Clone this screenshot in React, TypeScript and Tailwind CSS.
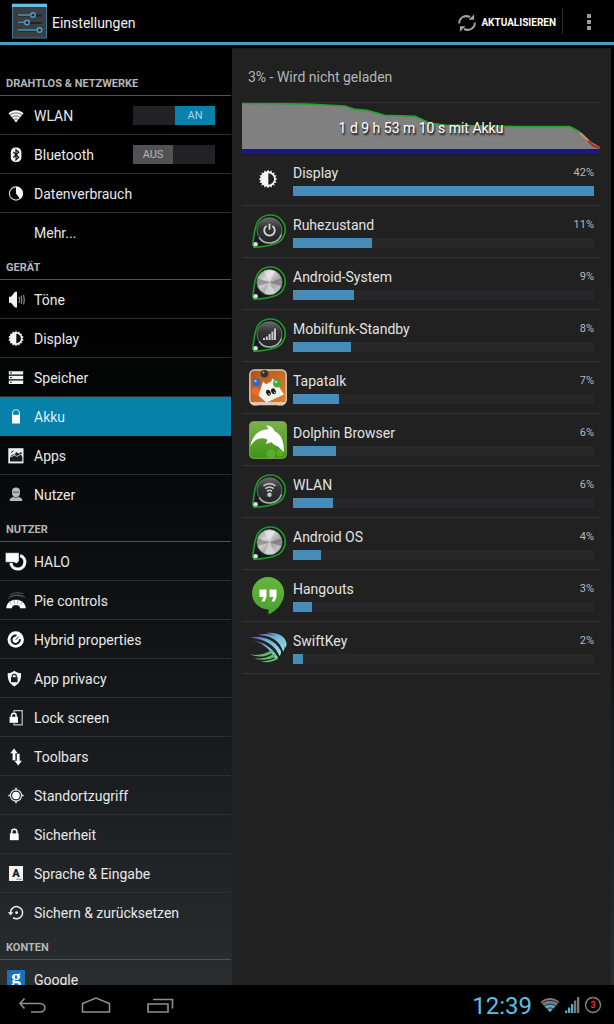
import type { ReactNode } from 'react';

function Glyph({ children }: { children: ReactNode }) {
  return (
    <svg viewBox="0 0 20 20" className="size-5 shrink-0 overflow-visible" fill="none" aria-hidden="true">
      {children}
    </svg>
  );
}

function gearPoints(cx: number, cy: number, outer: number, inner: number, teeth: number) {
  return Array.from({ length: teeth * 2 }, (_, i) => {
    const r = i % 2 === 0 ? outer : inner;
    const a = (i * Math.PI) / teeth;
    return `${(cx + r * Math.sin(a)).toFixed(2)},${(cy - r * Math.cos(a)).toFixed(2)}`;
  }).join(' ');
}

const WifiGlyph = (
  <Glyph>
    <path d="M10 16.5 2.5 7.2C6.6 3.3 13.4 3.3 17.5 7.2Z" fill="#f4f4f4" />
    <path d="M3.6 9.4c3.6-3.3 9.2-3.3 12.8 0M5.4 11.7c2.6-2.4 6.6-2.4 9.2 0M7.3 13.9c1.6-1.4 3.8-1.4 5.4 0" stroke="#111" strokeWidth=".6" />
  </Glyph>
);

const BluetoothGlyph = (
  <Glyph>
    <rect x="4.8" y="2.5" width="10.6" height="14.6" rx="4.6" fill="#f2f2f2" />
    <path d="m7.3 7 5.4 5.2-2.7 2.6V4.8l2.7 2.5-5.4 5.2" stroke="#111" strokeWidth="1.2" />
  </Glyph>
);

const DataGlyph = (
  <Glyph>
    <circle cx="10" cy="9.5" r="6.6" stroke="#d8d8d8" strokeWidth="1.1" />
    <path d="M10 2.7a6.8 6.8 0 0 1 4.2 12.2L10 9.5Z" fill="#fff" />
  </Glyph>
);

const SoundGlyph = (
  <Glyph>
    <path d="M3 6.8h2L9 1.8h2v15.800H9l-4-4.800H3Z" fill="#f4f4f4" />
    <path d="M12.8 6.8c1.1 1.9 1.1 4.1 0 6M15.2 5.6c.9 2.9.9 5.6 0 8.3M17.6 4.8c.9 3.3.9 6.6 0 9.6" stroke="#8d8d8d" strokeWidth="1.2" />
  </Glyph>
);

const DisplayGlyph = (
  <Glyph>
    <polygon points={gearPoints(10, 9.5, 7.8, 6.2, 14)} fill="#f4f4f4" />
    <path d="M10.3 4.8a4.7 4.7 0 0 1 0 9.4Z" fill="#0b0b0b" />
  </Glyph>
);

const StorageGlyph = (
  <Glyph>
    <path d="M2.8 3.2h14.4v3.4H2.8ZM2.8 7.8h14.4v3.4H2.8ZM2.8 12.4h14.4v3.600H2.8Z" fill="#f4f4f4" />
    <path d="M4 4.900h2M4 9.500h2M4 14.200h2" stroke="#222" />
  </Glyph>
);

const BatteryGlyph = (
  <Glyph>
    <path d="M6.6 8V5.200L8.300 3h3.400l1.700 2.200V8" stroke="#a9e4f6" strokeWidth="1.200" />
    <path d="M6 7.800h8v8.700H6Z" fill="#fff" />
  </Glyph>
);

const AppsGlyph = (
  <Glyph>
    <rect x="2.300" y="2.200" width="15.200" height="15.200" fill="#ededed" />
    <path d="M4 15.500v-4.300l2-2.400 3-.3 1-2.500 3 1.800 1.800-1.800 1.200 1-1 1.500 1.300 2.700V15.500Z" fill="#1b1b1b" />
    <path d="m4.500 11 4-1.800 2.500 1.200 4-2.200" stroke="#ededed" strokeWidth=".8" />
    <path d="M5 6.500 7.500 5" stroke="#1b1b1b" />
  </Glyph>
);

const UserGlyph = (
  <Glyph>
    <path d="M6 6.200a4 3.800 0 0 1 8 0v2.200C13.500 11 12 12.200 10 12.200S6.500 11 6 8.400Z" fill="#b9b9b9" />
    <path d="M6.600 7.200h6.800" stroke="#555" />
    <path d="M3.600 16c.1-2.700 1.700-3.500 4-3.900 1.500 1 3.300 1 4.800 0 2.300.4 3.900 1.200 4 3.900Z" fill="#b9b9b9" />
  </Glyph>
);

const HaloGlyph = (
  <Glyph>
    <path d="M14.200 3.500a7 7 0 1 1-9.300 7.500" stroke="#fff" strokeWidth="3" />
    <path d="M-.5.800h13.500v8.400L10.500 11.500 8 10.200H-.5Z" fill="#fff" stroke="#121517" strokeWidth=".4" />
  </Glyph>
);

const PieGlyph = (
  <Glyph>
    <path d="M.2 17.200C1 6 19 6 19.800 17.200h-5.600c-.5-4.300-7.900-4.300-8.400 0Z" fill="#fff" />
    <path d="m3 10.500 3.800 4M7.700 8l1 5M12.300 8l-1 5M17 10.500l-3.800 4" stroke="#777c80" strokeWidth=".6" />
    <path d="M2 7.500C6 3 14 3 19 6.500M4 4C8 1.200 13 1.200 17.500 3M4 6c3.500-2 9.500-2 13-.4" stroke="#5b6063" strokeWidth=".9" />
  </Glyph>
);

const HybridGlyph = (
  <Glyph>
    <circle cx="9.700" cy="9.500" r="8.200" fill="#fff" />
    <path d="M10.500 5.600a4.200 4.200 0 1 0 3.300 3.500" stroke="#15181a" strokeWidth="2" />
    <path d="m9.800 9.700 2.800-3" stroke="#15181a" strokeWidth="1" />
  </Glyph>
);

const PrivacyGlyph = (
  <Glyph>
    <path d="M1.700 4.200C4.500 4.100 6.500 3.300 8.300 1.800c1.900 1.500 4 2.300 6.800 2.400.2 6.200-1.500 10.500-6.800 13.200C3.200 14.700 1.500 10.400 1.700 4.200Z" fill="#f4f4f4" />
    <rect x="5" y="8.200" width="6.600" height="5" fill="#181b1d" />
    <path d="M6.300 8.500V7.300a2 2 0 0 1 4 0v1.200" stroke="#181b1d" strokeWidth="1.200" />
  </Glyph>
);

const LockScreenGlyph = (
  <Glyph>
    <path d="M8 4.500V2.600h8.200v14.200H8v-1.500" stroke="#bfc3c5" strokeWidth="1.200" />
    <rect x="3.600" y="8.800" width="8.400" height="6" fill="#fff" />
    <path d="M5.500 9V7.500a2.300 2.300 0 0 1 4.600 0V9" stroke="#fff" strokeWidth="1.500" />
  </Glyph>
);

const ToolbarsGlyph = (
  <Glyph>
    <path d="m8 1.500 3.700 4.800H9.400v7H6.600v-7H4.300Z" fill="#fff" />
    <path d="m12.200 18.500-3.700-4.800h2.300v-7h2.800v7h2.300Z" fill="#fff" />
  </Glyph>
);

const LocationGlyph = (
  <Glyph>
    <circle cx="10" cy="9.500" r="5.600" stroke="#ddd" strokeWidth="1.200" />
    <circle cx="10" cy="9.500" r="3.800" fill="#fff" />
    <path d="M10 1.800v2.800M10 14.400v2.800M2.300 9.500h2.800M14.900 9.500h2.800" stroke="#ddd" strokeWidth="1.600" />
  </Glyph>
);

const LockGlyph = (
  <Glyph>
    <rect x="3.900" y="8.400" width="8.800" height="6.800" fill="#fff" />
    <path d="M5.700 9V6.800a2.600 2.600 0 0 1 5.200 0V9" stroke="#fff" strokeWidth="1.500" />
  </Glyph>
);

const LanguageGlyph = (
  <Glyph>
    <rect x="3" y="2" width="14" height="15" fill="#f4f4f4" />
    <text x="10" y="13" textAnchor="middle" fontSize="11" fontWeight="900" fill="#1a1c1e" className="font-['Roboto',sans-serif]">A</text>
    <path d="M10.500 15.200h5" stroke="#444" strokeDasharray="1.200 .7" />
  </Glyph>
);

const BackupGlyph = (
  <Glyph>
    <path d="M4.500 10A6.100 6.100 0 1 1 7 14.600" stroke="#f0f0f0" strokeWidth="1.500" />
    <path d="M1.800 9.300h5.600L4.600 12.600Z" fill="#f0f0f0" />
    <circle cx="10.600" cy="9.700" r="1.400" fill="#f0f0f0" />
  </Glyph>
);

const GoogleGlyph = (
  <Glyph>
    <rect x="1" y="0" width="18" height="19" fill="#1672bd" />
    <text x="10" y="13" textAnchor="middle" fontSize="19" fontWeight="bold" fill="#fff" className="font-['Liberation_Serif',serif]">g</text>
  </Glyph>
);

type Entry = { label: string; icon?: ReactNode; toggle?: boolean; active?: boolean };

const sections: { title: string; entries: Entry[] }[] = [
  {
    title: 'DRAHTLOS & NETZWERKE',
    entries: [
      { label: 'WLAN', icon: WifiGlyph, toggle: true },
      { label: 'Bluetooth', icon: BluetoothGlyph, toggle: false },
      { label: 'Datenverbrauch', icon: DataGlyph },
      { label: 'Mehr...' },
    ],
  },
  {
    title: 'GERÄT',
    entries: [
      { label: 'Töne', icon: SoundGlyph },
      { label: 'Display', icon: DisplayGlyph },
      { label: 'Speicher', icon: StorageGlyph },
      { label: 'Akku', icon: BatteryGlyph, active: true },
      { label: 'Apps', icon: AppsGlyph },
      { label: 'Nutzer', icon: UserGlyph },
    ],
  },
  {
    title: 'NUTZER',
    entries: [
      { label: 'HALO', icon: HaloGlyph },
      { label: 'Pie controls', icon: PieGlyph },
      { label: 'Hybrid properties', icon: HybridGlyph },
      { label: 'App privacy', icon: PrivacyGlyph },
      { label: 'Lock screen', icon: LockScreenGlyph },
      { label: 'Toolbars', icon: ToolbarsGlyph },
      { label: 'Standortzugriff', icon: LocationGlyph },
      { label: 'Sicherheit', icon: LockGlyph },
      { label: 'Sprache & Eingabe', icon: LanguageGlyph },
      { label: 'Sichern & zurücksetzen', icon: BackupGlyph },
    ],
  },
  { title: 'KONTEN', entries: [{ label: 'Google', icon: GoogleGlyph }] },
];

function Toggle({ on, label }: { on: boolean; label: string }) {
  return (
    <button
      type="button"
      role="switch"
      aria-checked={on}
      aria-label={label}
      className={`mr-4 flex h-[19px] w-[82px] bg-[#222224] text-[11px] leading-5 ${on ? 'justify-end' : 'justify-start'}`}
    >
      <span className={on ? 'h-full w-10 bg-[#0a81aa] text-[#a5d4e6]' : 'h-full w-10 bg-[#525254] text-[#b4b4b4]'}>{on ? 'AN' : 'AUS'}</span>
    </button>
  );
}

function Sidebar() {
  return (
    <nav aria-label="Einstellungen" className="w-[231px] shrink-0 overflow-y-auto pt-[23px] [scrollbar-width:none]">
      {sections.map((section) => (
        <section key={section.title}>
          <h2 className="flex h-7 items-end border-b border-[#505355] pb-[3px] pl-1.5 text-[11px] leading-4 font-bold text-[#b4b6b7]">
            {section.title}
          </h2>
          <ul>
            {section.entries.map((e) => (
              <li
                key={e.label}
                className={`flex h-[39px] items-center border-b last:border-transparent ${e.active ? 'border-[#0780aa] bg-[#0780aa]' : 'border-[#2c3032]'}`}
              >
                <a
                  href="#"
                  aria-current={e.active ? 'page' : undefined}
                  className={`flex flex-1 items-center gap-2 pt-0.5 pl-1.5 text-[14px] leading-5 ${e.active ? 'text-[#d5f3fc]' : 'text-[#e8e8e8]'}`}
                >
                  {e.icon ?? <span className="w-5" />}
                  {e.label}
                </a>
                {e.toggle !== undefined && <Toggle on={e.toggle} label={e.label} />}
              </li>
            ))}
          </ul>
        </section>
      ))}
    </nav>
  );
}

function AppIcon({ children }: { children: ReactNode }) {
  return (
    <svg viewBox="0 0 38 38" className="size-[38px] shrink-0" fill="none" aria-hidden="true">
      {children}
    </svg>
  );
}

function Pin({ metal, children }: { metal?: boolean; children?: ReactNode }) {
  return (
    <AppIcon>
      <path d="M5 34.300 3.700 31C4.800 26 5 18 7.500 11.500A14.800 14.800 0 1 1 25.500 31C19 33 11 34 5 34.300Z" fill="#151c16" stroke="#1f9a2a" strokeWidth="1.600" />
      <circle cx="20.500" cy="17.200" r="12.500" fill={metal ? 'url(#metal)' : 'url(#knob)'} stroke={metal ? '#888' : '#6a706b'} />
      {metal && (
        <>
          <path d="M20.500 17.200 15 6.200a12 12 0 0 1 11 0ZM20.500 17.200l5.500 11a12 12 0 0 1-11 0Z" fill="#fff" opacity=".4" />
          <path d="m20.500 17.200-12-4v8ZM20.500 17.200l12-4v8Z" fill="#555" opacity=".45" />
        </>
      )}
      {!metal && <path d="M10 24.500a12.700 12.700 0 0 0 22.500-3" stroke="#a9ada9" strokeWidth="1.500" />}
      {children}
      <circle cx="6.600" cy="31.300" r="2.300" fill="#d5dfd5" />
    </AppIcon>
  );
}

const icons = {
  display: (
    <AppIcon>
      <polygon points={gearPoints(19, 18, 9.2, 7.3, 16)} fill="#f5f5f5" />
      <path d="M19.300 12.200a5.800 5.800 0 0 1 0 11.600Z" fill="#212121" />
    </AppIcon>
  ),
  idle: (
    <Pin>
      <path d="M17.500 13a5.300 5.300 0 1 0 6 0M20.500 10.800v6" stroke="#d8d8d8" strokeWidth="1.800" />
    </Pin>
  ),
  metal: <Pin metal />,
  cell: (
    <Pin>
      <path d="M15 23v-2M17.800 23v-3.500M20.600 23v-6M23.400 23v-8.500M26 23V11.500" stroke="#c8c8c8" strokeWidth="2" />
    </Pin>
  ),
  wlan: (
    <Pin>
      <path d="M14.500 13c3.500-3 8.500-3 12 0M16.300 15.700c2.500-2 6-2 8.400 0M18 18.300c1.500-1.200 3.500-1.200 5 0" stroke="#c8c8c8" strokeWidth="1.600" />
      <circle cx="20.500" cy="21.800" r="2.200" fill="#c8c8c8" />
    </Pin>
  ),
  tapatalk: (
    <AppIcon>
      <path d="M3 34h6v2.500H4ZM29 34h6l-1 2.500h-5Z" fill="#bbb" />
      <rect x=".8" y="1" width="36.400" height="34.500" rx="4.500" fill="url(#orange)" stroke="#d9cbbd" strokeWidth="1.400" />
      <path d="M2 34h34" stroke="#e8ded4" strokeWidth="1.500" />
      <circle cx="15.500" cy="4.800" r="3.800" fill="#30302e" />
      <circle cx="14.500" cy="3.600" r="1" fill="#aaa" />
      <circle cx="7.500" cy="13.500" r="3.900" fill="#3267c8" />
      <circle cx="6.500" cy="12" r="1.200" fill="#a8c4f4" />
      <circle cx="6.500" cy="22.500" r="3.700" fill="#ef6a2d" />
      <path d="m14 12.500 3 2.800 5.500-3 .5-3 3.500 3L35 25.500 17.500 33.500 9.500 26.500Z" fill="#f7f4ef" />
      <circle cx="28" cy="14.500" r="4" fill="#4bab36" />
      <circle cx="27" cy="13" r="1.200" fill="#b7e6a7" />
      <ellipse cx="19.500" cy="23.800" rx="2.200" ry="3.100" fill="#191919" transform="rotate(-25 19.500 23.800)" />
      <ellipse cx="24.500" cy="22.300" rx="2.200" ry="3.100" fill="#191919" transform="rotate(-25 24.500 22.300)" />
      <path d="m19.800 24.200 1 1.500M24.800 22.700l1 1.500" stroke="#fff" />
    </AppIcon>
  ),
  dolphin: (
    <AppIcon>
      <rect x=".7" y=".7" width="36.600" height="36.600" rx="3.500" fill="url(#green)" stroke="#79b34c" />
      <circle cx="22" cy="33" r="4.500" fill="#74bf3a" opacity=".5" />
      <circle cx="31" cy="32" r="3.500" fill="#74bf3a" opacity=".5" />
      <path d="M1.300 25.500C3 15.500 9 8.500 19 8.600c.3-1.800-.8-3.200-2.500-4 3.500-.6 7.300 1.200 9 5.300 5.500 2.800 8 7.500 9 13.600.4 2.500.2 5 .6 7.500-2.300-2-4.300-3.800-6.100-5.500-3-.8-5-2.300-6.500-4.500-1.300 1.200-3.500 1.800-6 1.300 1.300-1 1.800-2.300 1.500-4C12 15.500 5 18 1.300 25.500Z" fill="#fff" />
    </AppIcon>
  ),
  hangouts: (
    <AppIcon>
      <path d="M19 0a16.200 16.200 0 0 1 16.200 16.200c0 8-6.700 17.500-15.700 21.200v-5A16.200 16.200 0 1 1 19 0Z" fill="url(#lime)" />
      <path d="M10.500 12.500h7V20l-2 4.500h-3l2-4.500h-4ZM20.500 12.500h7V20l-2 4.500h-3l2-4.500h-4Z" fill="#fff" />
    </AppIcon>
  ),
  swiftkey: (
    <AppIcon>
      <path d="M0 8.500c8-1 24-1.500 32 13.500 0 3-.5 4-1.500 5C26 16 15 9.500 0 8.500Z" fill="url(#swift)" />
      <path d="M9 6C20 3 32 7 35.500 17c.3 2.500-.3 4-1.300 5.500C30.500 11.500 22 6.500 9 6ZM17 4c9-1.500 19 2 20.500 10 .2 2-.3 3.500-1.200 5C34 10.500 27 5.500 17 4Z" fill="url(#swift)" />
      <path d="M4 11.500c9 1 19 6 25 17l-2.500 2C21.500 20.500 14.500 14.500 4 11.500Z" fill="url(#swift)" />
      <path d="M1 25.500c10 1.500 16-1 21.500-4.500l2 2.500C19 27 11 29.500 1 25.500ZM5 29.500c9 .5 15-1.500 20.500-5l1.500 2.500c-6 4-14 5-22 2.500ZM12 32.500c6-.3 11-1.500 16-4.500l1 2C24 33 18 34 12 32.500Z" fill="#63b96b" />
    </AppIcon>
  ),
};

const usage = [
  { name: 'Display', value: '42%', bar: 100, icon: icons.display },
  { name: 'Ruhezustand', value: '11%', bar: 26.2, icon: icons.idle },
  { name: 'Android-System', value: '9%', bar: 20.3, icon: icons.metal },
  { name: 'Mobilfunk-Standby', value: '8%', bar: 19.3, icon: icons.cell },
  { name: 'Tapatalk', value: '7%', bar: 15.3, icon: icons.tapatalk },
  { name: 'Dolphin Browser', value: '6%', bar: 14.3, icon: icons.dolphin },
  { name: 'WLAN', value: '6%', bar: 13.2, icon: icons.wlan },
  { name: 'Android OS', value: '4%', bar: 9.2, icon: icons.metal },
  { name: 'Hangouts', value: '3%', bar: 6.3, icon: icons.hangouts },
  { name: 'SwiftKey', value: '2%', bar: 3.3, icon: icons.swiftkey },
];

function Gradients() {
  return (
    <svg className="absolute size-0" aria-hidden="true">
      <defs>
        <linearGradient id="metal" x1="0" y1="0" x2="1" y2="1">
          <stop stopColor="#8d8d8d" /><stop offset=".35" stopColor="#d8d8d8" /><stop offset=".6" stopColor="#a8a8a8" /><stop offset="1" stopColor="#dadada" />
        </linearGradient>
        <linearGradient id="knob" x1="0" y1="0" x2="0" y2="1">
          <stop stopColor="#666a67" /><stop offset=".4" stopColor="#343436" /><stop offset="1" stopColor="#252427" />
        </linearGradient>
        <linearGradient id="orange" x1="0" y1="0" x2="1" y2="1">
          <stop stopColor="#a8541c" /><stop offset="1" stopColor="#e5822d" />
        </linearGradient>
        <linearGradient id="green" x1="0" y1="0" x2="0" y2="1">
          <stop stopColor="#7db04c" /><stop offset="1" stopColor="#3f9314" />
        </linearGradient>
        <linearGradient id="lime" x1="0" y1="0" x2="0" y2="1">
          <stop stopColor="#67b63c" /><stop offset="1" stopColor="#48a12c" />
        </linearGradient>
        <linearGradient id="swift" x1="0" y1="0" x2="1" y2="1">
          <stop stopColor="#7456b8" /><stop offset=".4" stopColor="#6cb4d8" /><stop offset="1" stopColor="#9fe6e4" />
        </linearGradient>
      </defs>
    </svg>
  );
}

function History() {
  return (
    <div className="relative h-[52px] border-t border-[#333]">
      <svg viewBox="0 0 358 52" preserveAspectRatio="none" className="h-full w-full" fill="none" aria-hidden="true">
        <path d="M0 .5 65 1l38 2 10 3.500 12 1 18 5 30 1 15 7 15 2 70 1.500h55l12 6.500 9 9 9 5v3.500H0Z" fill="#808080" />
        <path d="M0 .5 65 1l38 2 10 3.500 12 1 18 5 30 1 15 7 15 2 70 1.500h55l10 5.500" stroke="#22a32c" strokeWidth="1.600" />
        <path d="m338 30.500 9 8.500" stroke="#d0a040" strokeWidth="1.600" />
        <path d="m346 38.500 5 5 7 2.500" stroke="#cf1d1d" strokeWidth="1.800" />
        <path d="M0 47h358v4.500H0Z" fill="#181884" />
      </svg>
      <p className="absolute inset-x-0 top-[15px] text-center text-[14px] leading-5 text-white [text-shadow:1px_2px_2px_#000]">1 d 9 h 53 m 10 s mit Akku</p>
    </div>
  );
}

export default function App() {
  return (
    <div className="flex h-screen flex-col bg-black font-['Roboto',sans-serif] text-white">
      <Gradients />
      <header className="flex h-[45px] shrink-0 items-center border-b-3 border-[#4a9cc4] pl-3">
        <svg viewBox="0 0 36 36" className="size-9 shrink-0" fill="none" aria-hidden="true">
          <rect x=".5" y="1" width="34" height="34" fill="#3b3e41" stroke="#3f7796" />
          <path d="M0 2.500h35" stroke="#69bce2" strokeWidth="3" />
          <path d="M6 12.500h24M6 20h24M6 27.500h24" stroke="#202326" strokeWidth="2" />
          <path d="M6 12h13M6 19.500h7M6 27h19" stroke="#4b96bd" strokeWidth="1.500" />
          <circle cx="21" cy="12" r="2.300" stroke="#4b9cc8" strokeWidth="1.500" />
          <circle cx="15" cy="19.500" r="2.300" stroke="#4b9cc8" strokeWidth="1.500" />
          <circle cx="27.500" cy="27" r="2.300" stroke="#4b9cc8" strokeWidth="1.500" />
        </svg>
        <h1 className="ml-1 flex-1 pt-1 text-[14px] leading-5 text-[#f0f0f0]">Einstellungen</h1>
        <button type="button" className="flex items-center gap-1 pt-1 pr-1.5 text-[10px] leading-4 font-bold">
          <svg viewBox="0 0 20 20" className="size-5" fill="none" aria-hidden="true">
            <path d="M2.200 10.500C2 5 7.500 1.500 13 4M17.800 9.500C18 15 12.500 18.500 7 16" stroke="#a2a2a2" strokeWidth="2" />
            <path d="M11.500 6.800h5.600V1.200ZM8.500 13.200H2.900v5.600Z" fill="#a2a2a2" />
          </svg>
          AKTUALISIEREN
        </button>
        <button type="button" aria-label="Weitere Optionen" className="flex h-[26px] w-[52px] items-center justify-center border-l border-[#2b2b2b]">
          <svg viewBox="0 0 6 18" className="h-[18px] w-1.5" aria-hidden="true">
            <path d="M1 2h4v4H1ZM1 8h4v4H1ZM1 14h4v4H1Z" fill="#9a9a9a" />
          </svg>
        </button>
      </header>

      <div className="flex min-h-0 flex-1 bg-linear-to-b from-black to-[#292d30]">
        <Sidebar />
        <main className="mt-[3px] mr-[3px] ml-px flex-1 overflow-y-auto border-t border-[#1b1b1b] bg-[#212121] pr-[11px] pl-2.5 [scrollbar-width:none]">
          <p className="pt-[18px] pb-[15px] pl-1.5 text-[14px] leading-5 text-[#b5b5b5]">3% - Wird nicht geladen</p>
          <History />
          <ul>
            {usage.map((u) => (
              <li key={u.name} className="flex h-13 items-center gap-1.5 border-b border-[#343434] pr-1.5 pl-[7px]">
                {u.icon}
                <div className="flex-1">
                  <div className="flex items-center justify-between">
                    <span className="text-[14px] leading-5 text-[#e2e2e2]">{u.name}</span>
                    <span className="text-[11px] leading-5 text-[#b8b8b8]">{u.value}</span>
                  </div>
                  <div className="mt-[3px] h-2.5 bg-[#27272a]">
                    <div className="h-full bg-[#468cb8]" style={{ width: `${u.bar}%` }} />
                  </div>
                </div>
              </li>
            ))}
          </ul>
        </main>
      </div>

      <footer className="flex h-[39px] shrink-0 items-center justify-between bg-black pr-3 pl-[17px]">
        <div className="flex gap-[34px]">
          <button type="button" aria-label="Zurück">
            <svg viewBox="0 0 30 20" className="h-5 w-[30px]" fill="none" stroke="#8f8f8f" strokeWidth="1.600" aria-hidden="true">
              <path d="M7.500 3.500 3 8.500 7.500 13.500M3 8.500h20c6.500 0 6.500 8.500 0 8.500h-9" />
            </svg>
          </button>
          <button type="button" aria-label="Startseite">
            <svg viewBox="0 0 30 20" className="h-5 w-[30px]" fill="none" stroke="#8f8f8f" strokeWidth="1.600" aria-hidden="true">
              <path d="M1.500 17V8.500L15 3l13.500 5.500V17Z" />
            </svg>
          </button>
          <button type="button" aria-label="Letzte Apps">
            <svg viewBox="0 0 30 20" className="h-5 w-[30px]" fill="none" stroke="#8f8f8f" strokeWidth="1.600" aria-hidden="true">
              <path d="M3 9h20v8H3ZM8 4.500h19.500v9" />
            </svg>
          </button>
        </div>
        <div className="flex items-center gap-1">
          <time className="mr-1 pt-0.5 text-[24px] leading-7 text-[#5cbfe6]">12:39</time>
          <svg viewBox="0 0 20 20" className="size-5" fill="none" aria-hidden="true">
            <path d="M10 17 .5 7C6 1.700 14 1.700 19.500 7Z" fill="#77797a" />
            <path d="M10 17 4.300 11c3.300-2.800 8.100-2.800 11.400 0Z" fill="#5aa9c8" />
            <path d="M1.500 8.600c5-4.300 12-4.300 17 0M4 11.500c3.500-3 8.500-3 12 0M6.500 14.200c2-1.700 5-1.700 7 0" stroke="#111" strokeWidth=".8" />
          </svg>
          <svg viewBox="0 0 16 20" className="h-5 w-4" aria-hidden="true">
            <path d="M1 15.500h2.300V18H1ZM4 12.500h2.300V18H4ZM7 9h2.300v9H7Z" fill="#5aa9c8" />
            <path d="M10 5.500h2.300V18H10ZM13 2h2.300v16H13Z" fill="#77797a" />
          </svg>
          <svg viewBox="0 0 18 20" className="h-5 w-[18px]" fill="none" aria-hidden="true">
            <circle cx="9" cy="10" r="7.500" stroke="#8a8a8a" strokeWidth="1.300" />
            <path d="M8 2.500h2" stroke="#d22" strokeWidth="1.600" />
            <text x="9" y="13" textAnchor="middle" fontSize="9" fontWeight="bold" fill="#e0352f">3</text>
          </svg>
        </div>
      </footer>
    </div>
  );
}
